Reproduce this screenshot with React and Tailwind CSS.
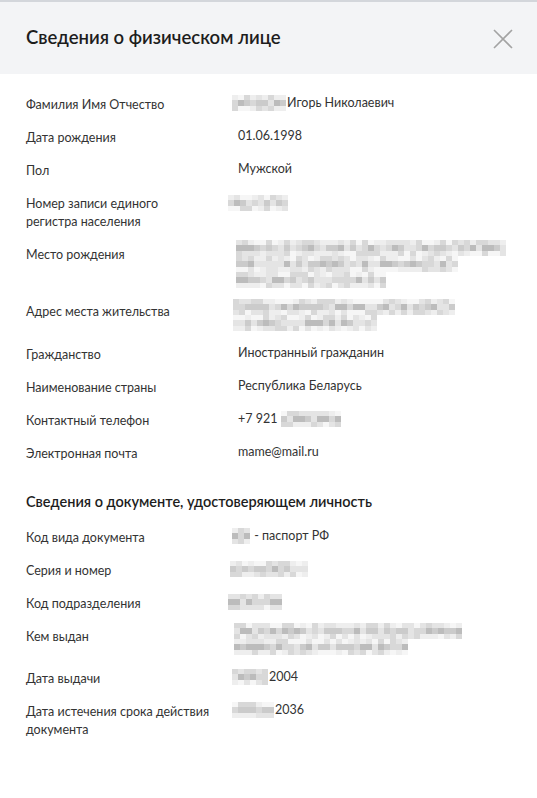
// Person details modal: header, personal data list, identity document list.
// Sensitive values are shown as pixelated blocks, like the source screenshot.

const FONT = "font-['Lato','Noto_Sans',sans-serif]";

const GRAYS = [
  "bg-[#f6f6f6]",
  "bg-[#eeeeee]",
  "bg-[#e4e4e4]",
  "bg-[#d8d8d8]",
  "bg-[#cbcbcb]",
  "bg-[#bcbcbc]",
  "bg-[#aaaaaa]",
];

function rand(seed) {
  let s = seed;
  return () => {
    s = (s * 9301 + 49297) % 233280;
    return s / 233280;
  };
}

// lines: widths in px of each blurred text line
function Blur({ lines, seed = 1 }) {
  const r = rand(seed);
  const rows = [];
  lines.forEach((w, li) => {
    const n = Math.max(1, Math.round(w / 6));
    [
      [0, 3, "h-[5px]"],
      [2, 5, "h-[6px]"],
      [0, 3, "h-[5px]"],
    ].forEach(([lo, hi, h], ri) => {
      const cells = [];
      for (let i = 0; i < n; i++) {
        const k = lo + Math.floor(r() * (hi - lo + 1));
        cells.push(<div key={i} className={`w-[6px] ${h} ${GRAYS[Math.min(k, 6)]}`} />);
      }
      rows.push(
        <div key={li + "-" + ri} className="flex">
          {cells}
        </div>
      );
    });
  });
  return <div className="flex flex-col">{rows}</div>;
}

function Row({ label, children }) {
  return (
    <div className="flex text-[12.5px] leading-[18px] text-[#333333]">
      <div className="w-[212px] shrink-0 pr-2">{label}</div>
      <div className="-mt-[2px] flex-1">{children}</div>
    </div>
  );
}

function Inline({ w, seed, children }) {
  return (
    <span className="flex items-center">
      <span className="-ml-[6px] mr-[1px]">
        <Blur lines={[w]} seed={seed} />
      </span>
      {children}
    </span>
  );
}

export default function App() {
  return (
    <div className={`${FONT} min-h-[798px] w-[537px] bg-white`}>
      <header className="flex h-[74px] items-center justify-between border-t-2 border-[#d3d6db] bg-[#f3f4f6] pl-[26px] pr-[24px]">
        <h1 className="text-[18.5px] font-semibold text-[#1d1d1d]">Сведения о физическом лице</h1>
        <svg width="20" height="20" viewBox="0 0 20 20" className="mt-[2px]">
          <path d="M1 1 L19 19 M19 1 L1 19" stroke="#a3a3a3" strokeWidth="1.6" fill="none" />
        </svg>
      </header>

      <div className="flex flex-col gap-[15px] pl-[26px] pr-4 pt-[22px]">
        <Row label="Фамилия Имя Отчество">
          <Inline w={54} seed={3}>Игорь Николаевич</Inline>
        </Row>
        <Row label="Дата рождения">01.06.1998</Row>
        <Row label="Пол">Мужской</Row>
        <Row label={<>Номер записи единого<br />регистра населения</>}>
          <div className="-ml-[10px] pt-[2px]">
            <Blur lines={[60]} seed={7} />
          </div>
        </Row>
        <Row label="Место рождения">
          <div className="-ml-[2px] -mt-[4px]">
            <Blur lines={[268, 222, 152]} seed={11} />
          </div>
        </Row>
        <Row label="Адрес места жительства">
          <div className="-ml-[5px] -mt-[2px]">
            <Blur lines={[220, 142]} seed={19} />
          </div>
        </Row>
        <Row label="Гражданство">Иностранный гражданин</Row>
        <Row label="Наименование страны">Республика Беларусь</Row>
        <Row label="Контактный телефон">
          <span className="flex items-center">
            +7 921
            <span className="ml-[4px]">
              <Blur lines={[60]} seed={23} />
            </span>
          </span>
        </Row>
        <Row label="Электронная почта">mame@mail.ru</Row>

        <h2 className="mb-[2px] mt-[14px] text-[14.5px] font-semibold leading-[20px] text-[#1d1d1d]">
          Сведения о документе, удостоверяющем личность
        </h2>

        <Row label="Код вида документа">
          <Inline w={18} seed={29}>&nbsp;- паспорт РФ</Inline>
        </Row>
        <Row label="Серия и номер">
          <div className="-ml-[8px] pt-[1px]">
            <Blur lines={[76]} seed={31} />
          </div>
        </Row>
        <Row label="Код подразделения">
          <div className="-ml-[10px] pt-[1px]">
            <Blur lines={[54]} seed={37} />
          </div>
        </Row>
        <Row label="Кем выдан">
          <div className="-ml-[4px] -mt-[3px]">
            <Blur lines={[228, 174]} seed={41} />
          </div>
        </Row>
        <Row label="Дата выдачи">
          <Inline w={36} seed={43}>2004</Inline>
        </Row>
        <Row label={<>Дата истечения срока действия<br />документа</>}>
          <Inline w={40} seed={47}>2036</Inline>
        </Row>
      </div>
    </div>
  );
}
